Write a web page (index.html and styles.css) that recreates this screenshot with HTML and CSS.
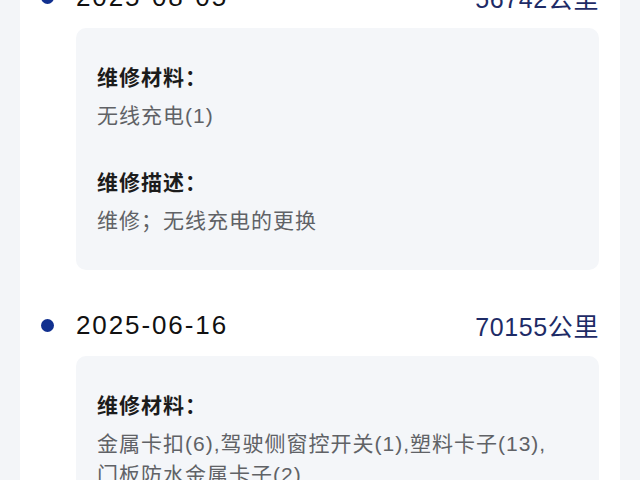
FILE: index.html
```html
<!DOCTYPE html>
<html lang="zh-CN">
<head>
<meta charset="utf-8">
<link rel="stylesheet" href="styles.css">
</head>
<body>
<div class="card">
  <div class="record">
    <div class="head">
      <span class="dot"></span>
      <span class="date">2025-08-05</span>
      <span class="km">56742公里</span>
    </div>
    <div class="box">
      <div class="label">维修材料：</div>
      <div class="value">无线充电(1)</div>
      <div class="label second">维修描述：</div>
      <div class="value">维修；无线充电的更换</div>
    </div>
  </div>
  <div class="record">
    <div class="head">
      <span class="dot"></span>
      <span class="date">2025-06-16</span>
      <span class="km">70155公里</span>
    </div>
    <div class="box">
      <div class="label">维修材料：</div>
      <div class="value">金属卡扣(6),驾驶侧窗控开关(1),塑料卡子(13),门板防水金属卡子(2)</div>
      <div class="label second">维修描述：</div>
      <div class="value">维修；车门内饰板的拆装</div>
    </div>
  </div>
</div>
</body>
</html>
```
FILE: styles.css
```css
html, body {
  margin: 0;
  padding: 0;
  background: #f3f5f8;
  height: 480px;
  overflow: hidden;
}
body {
  font-family: "Liberation Sans", "Noto Sans CJK SC", sans-serif;
}
.card {
  margin: -23px 20px 0 20px;
  background: #ffffff;
  padding: 0 21px 0 21px;
  min-height: 600px;
}
.record {
  padding-bottom: 35px;
}
.head {
  display: flex;
  align-items: center;
  height: 40px;
}
.dot {
  width: 13px;
  height: 13px;
  border-radius: 50%;
  background: #11308f;
  margin-right: 22px;
}
.date {
  font-size: 26px;
  letter-spacing: 1.9px;
  color: #111111;
}
.km {
  margin-left: auto;
  font-size: 25px;
  letter-spacing: 0.6px;
  color: #1e2b66;
}
.box {
  margin: 11px 0 0 35px;
  background: #f4f6f9;
  border-radius: 10px;
  padding: 34px 21px 34px 21px;
}
.label {
  font-size: 21px;
  letter-spacing: 1px;
  font-weight: 700;
  color: #1c1c1c;
  line-height: 32px;
}
.label.second {
  margin-top: 36px;
}
.value {
  font-size: 21px;
  letter-spacing: 1px;
  color: #606266;
  line-height: 31px;
  margin-top: 6px;
  max-width: 462px;
}
```
